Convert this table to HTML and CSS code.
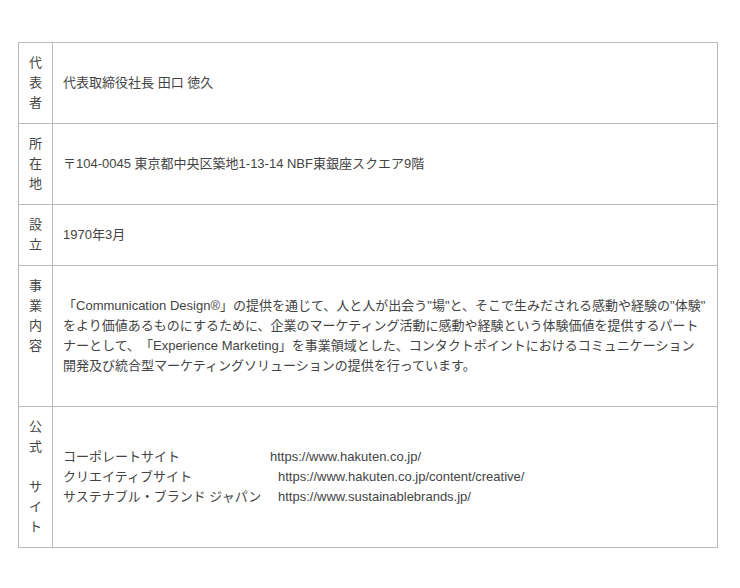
FILE: index.html
```html
<!DOCTYPE html>
<html lang="ja">
<head>
    <meta charset="UTF-8">
    <meta name="viewport" content="width=device-width, initial-scale=1.0">
    <title>会社概要</title>
    <link rel="stylesheet" href="styles.css">
</head>
<body>
    <div class="wrap">
        <table class="outline">
            <tr>
                <th>代表者</th>
                <td>代表取締役社長 田口 徳久</td>
            </tr>
            <tr>
                <th>所在地</th>
                <td>〒104-0045 東京都中央区築地1-13-14 NBF東銀座スクエア9階</td>
            </tr>
            <tr>
                <th>設立</th>
                <td>1970年3月</td>
            </tr>
            <tr>
                <th>事業内容</th>
                <td class="tall">「Communication Design®」の提供を通じて、人と人が出会う"場"と、そこで生みだされる感動や経験の"体験"<br>をより価値あるものにするために、企業のマーケティング活動に感動や経験という体験価値を提供するパート<br>ナーとして、「Experience Marketing」を事業領域とした、コンタクトポイントにおけるコミュニケーション<br>開発及び統合型マーケティングソリューションの提供を行っています。</td>
            </tr>
            <tr>
                <th>公式<br><br>サイト</th>
                <td class="tall">
                    <div class="site"><span class="site-name">コーポレートサイト</span><span class="site-url first">https://www.hakuten.co.jp/</span></div>
                    <div class="site"><span class="site-name">クリエイティブサイト</span><span class="site-url">https://www.hakuten.co.jp/content/creative/</span></div>
                    <div class="site"><span class="site-name">サステナブル・ブランド ジャパン</span><span class="site-url">https://www.sustainablebrands.jp/</span></div>
                </td>
            </tr>
        </table>
    </div>
</body>
</html>
```

FILE: styles.css
```css
body {
    margin: 0;
    background: #fff;
    color: #444;
    font-family: "Liberation Sans", Arial, "Noto Sans CJK JP", sans-serif;
    font-size: 13px;
    line-height: 20px;
    text-spacing-trim: space-all;
}
.wrap {
    padding: 42px 22px 40px 18px;
}
.outline {
    width: 700px;
    border-collapse: collapse;
}
.outline th,
.outline td {
    border: 1px solid #bbb;
    padding: 10px;
    text-align: left;
}
.outline th {
    width: 13px;
    font-weight: normal;
    vertical-align: top;
    word-break: break-all;
}
.outline td {
    vertical-align: middle;
    white-space: nowrap;
}
.outline td.tall {
    height: 120px;
}
.site {
    display: flex;
}
.site-name {
    width: 215px;
}
.site-url.first {
    margin-left: -8px;
}
```
